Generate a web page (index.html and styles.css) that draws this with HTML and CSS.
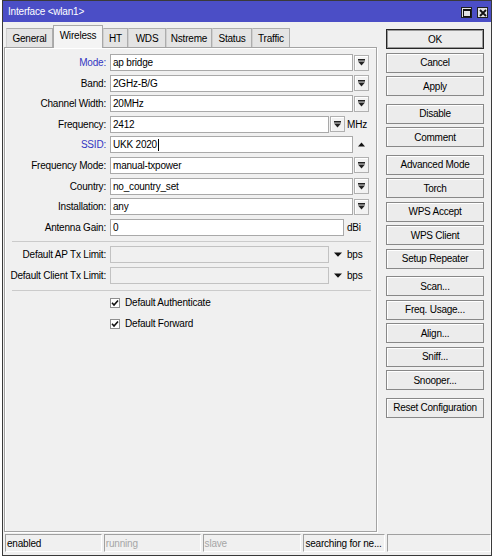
FILE: index.html
```html
<!DOCTYPE html>
<html>
<head>
<meta charset="utf-8">
<link rel="stylesheet" href="styles.css">
</head>
<body>
<div class="window">
  <div class="titlebar">
    <span class="title">Interface &lt;wlan1&gt;</span>
    <div class="tb-btns">
      <span class="tb-btn"><svg width="8" height="8" viewBox="0 0 8 8"><rect x="0.5" y="0.5" width="7" height="7" fill="none" stroke="#111" stroke-width="1"/><rect x="0" y="0" width="8" height="2" fill="#111"/></svg></span>
      <span class="tb-btn"><svg width="8" height="8" viewBox="0 0 8 8"><path d="M1 1L7 7M7 1L1 7" stroke="#111" stroke-width="1.8"/></svg></span>
    </div>
  </div>
  <div class="main">
    <div class="left">
      <div class="tabs">
        <div class="tab t-general">General</div>
        <div class="tab active t-wireless">Wireless</div>
        <div class="tab t-ht">HT</div>
        <div class="tab t-wds">WDS</div>
        <div class="tab t-nstreme">Nstreme</div>
        <div class="tab t-status">Status</div>
        <div class="tab t-traffic">Traffic</div>
      </div>
      <div class="panel">
        <div class="group">
          <div class="row"><span class="lbl blue">Mode:</span><span class="field w-full">ap bridge</span><span class="dropbtn"><svg width="7" height="7" viewBox="0 0 7 7"><rect x="0" y="0" width="7" height="1.6" fill="#222"/><path d="M0 2.6H7L3.5 6.6Z" fill="#222"/></svg></span></div>
          <div class="row"><span class="lbl">Band:</span><span class="field w-full">2GHz-B/G</span><span class="dropbtn"><svg width="7" height="7" viewBox="0 0 7 7"><rect x="0" y="0" width="7" height="1.6" fill="#222"/><path d="M0 2.6H7L3.5 6.6Z" fill="#222"/></svg></span></div>
          <div class="row"><span class="lbl">Channel Width:</span><span class="field w-full">20MHz</span><span class="dropbtn"><svg width="7" height="7" viewBox="0 0 7 7"><rect x="0" y="0" width="7" height="1.6" fill="#222"/><path d="M0 2.6H7L3.5 6.6Z" fill="#222"/></svg></span></div>
          <div class="row"><span class="lbl">Frequency:</span><span class="field w-short">2412</span><span class="dropbtn"><svg width="7" height="7" viewBox="0 0 7 7"><rect x="0" y="0" width="7" height="1.6" fill="#222"/><path d="M0 2.6H7L3.5 6.6Z" fill="#222"/></svg></span><span class="unit u-btn">MHz</span></div>
          <div class="row"><span class="lbl blue">SSID:</span><span class="field w-full">UKK 2020<span class="caret"></span></span><span class="uparrow"><svg width="7" height="5" viewBox="0 0 7 5"><path d="M0 4.5H7L3.5 0.5Z" fill="#111"/></svg></span></div>
          <div class="row"><span class="lbl">Frequency Mode:</span><span class="field w-full">manual-txpower</span><span class="dropbtn"><svg width="7" height="7" viewBox="0 0 7 7"><rect x="0" y="0" width="7" height="1.6" fill="#222"/><path d="M0 2.6H7L3.5 6.6Z" fill="#222"/></svg></span></div>
          <div class="row"><span class="lbl">Country:</span><span class="field w-full">no_country_set</span><span class="dropbtn"><svg width="7" height="7" viewBox="0 0 7 7"><rect x="0" y="0" width="7" height="1.6" fill="#222"/><path d="M0 2.6H7L3.5 6.6Z" fill="#222"/></svg></span></div>
          <div class="row"><span class="lbl">Installation:</span><span class="field w-full">any</span><span class="dropbtn"><svg width="7" height="7" viewBox="0 0 7 7"><rect x="0" y="0" width="7" height="1.6" fill="#222"/><path d="M0 2.6H7L3.5 6.6Z" fill="#222"/></svg></span></div>
          <div class="row"><span class="lbl">Antenna Gain:</span><span class="field w-mid">0</span><span class="unit u-field">dBi</span></div>
        </div>
        <div class="sep sep1"></div>
        <div class="group">
          <div class="row"><span class="lbl">Default AP Tx Limit:</span><span class="field w-short disabled"></span><span class="downarrow"><svg width="8" height="5" viewBox="0 0 8 5"><path d="M0 0.5H8L4 4.8Z" fill="#111"/></svg></span><span class="unit u-arrow">bps</span></div>
          <div class="row"><span class="lbl">Default Client Tx Limit:</span><span class="field w-short disabled"></span><span class="downarrow"><svg width="8" height="5" viewBox="0 0 8 5"><path d="M0 0.5H8L4 4.8Z" fill="#111"/></svg></span><span class="unit u-arrow">bps</span></div>
        </div>
        <div class="sep sep2"></div>
        <div class="checks">
          <div class="crow"><span class="cbox"><svg width="8" height="8" viewBox="0 0 8 8"><path d="M1 3.8L3 6L7 1.5" fill="none" stroke="#111" stroke-width="1.6"/></svg></span><span>Default Authenticate</span></div>
          <div class="crow"><span class="cbox"><svg width="8" height="8" viewBox="0 0 8 8"><path d="M1 3.8L3 6L7 1.5" fill="none" stroke="#111" stroke-width="1.6"/></svg></span><span>Default Forward</span></div>
        </div>
      </div>
    </div>
    <div class="side">
      <div class="bgroup">
        <div class="btn default">OK</div>
        <div class="btn">Cancel</div>
        <div class="btn">Apply</div>
      </div>
      <div class="bgroup">
        <div class="btn">Disable</div>
        <div class="btn">Comment</div>
      </div>
      <div class="bgroup">
        <div class="btn">Advanced Mode</div>
        <div class="btn">Torch</div>
        <div class="btn">WPS Accept</div>
        <div class="btn">WPS Client</div>
        <div class="btn">Setup Repeater</div>
      </div>
      <div class="bgroup">
        <div class="btn">Scan...</div>
        <div class="btn">Freq. Usage...</div>
        <div class="btn">Align...</div>
        <div class="btn">Sniff...</div>
        <div class="btn">Snooper...</div>
      </div>
      <div class="bgroup">
        <div class="btn">Reset Configuration</div>
      </div>
    </div>
  </div>
  <div class="statusbar">
    <span class="sfield s1">enabled</span>
    <span class="sfield s2 dim">running</span>
    <span class="sfield s3 dim">slave</span>
    <span class="sfield s4">searching for ne...</span>
    <span class="sfield s5"></span>
  </div>
</div>
</body>
</html>
```

FILE: styles.css
```css
* { box-sizing: border-box; }

body {
  margin: 0;
  padding: 0 2px;
  background: #ffffff;
  font-family: "Liberation Sans", Arial, sans-serif;
  font-size: 10px;
  letter-spacing: -0.2px;
  color: #000;
}

.window {
  width: 490px;
  height: 556px;
  border: 1px solid #3a3a3a;
  background: #f0f0f0;
  display: flex;
  flex-direction: column;
}

.titlebar {
  flex: none;
  height: 21px;
  background: #4b4ec6;
  color: #fff;
  display: flex;
  align-items: center;
  padding: 0 3px 0 5px;
}

.title {
  flex: 1;
  line-height: 1;
  padding-top: 1px;
}

.tb-btns {
  display: flex;
  gap: 5px;
  padding-top: 2px;
}

.tb-btn {
  width: 11px;
  height: 11px;
  background: #e2e2e2;
  border: 1px solid #202020;
  display: flex;
  align-items: center;
  justify-content: center;
}

.main {
  flex: none;
  height: 510px;
  display: flex;
}

.left {
  width: 374px;
  padding-left: 1px;
  display: flex;
  flex-direction: column;
}

.tabs {
  height: 25px;
  display: flex;
  align-items: flex-end;
  padding-left: 2px;
}

.tab {
  height: 19px;
  border: 1px solid #adadad;
  border-bottom: none;
  border-left-color: #d0d0d0;
  background: #e4e4e4;
  display: flex;
  align-items: center;
  justify-content: center;
  white-space: nowrap;
}

.tab.active {
  height: 23px;
  margin-bottom: -1px;
  background: #f4f4f4;
  position: relative;
  z-index: 1;
  border-color: #a8a8a8;
  padding-bottom: 3px;
}

.t-general { width: 47px; }
.t-wireless { width: 50px; }
.t-ht { width: 25px; }
.t-wds { width: 38px; }
.t-nstreme { width: 46px; }
.t-status { width: 40px; }
.t-traffic { width: 38px; }

.panel {
  height: 485px;
  width: 373px;
  border: 1px solid #a3a3a3;
  box-shadow: inset 1px 1px 0 #ffffff, 1px 1px 0 #ffffff;
  padding-top: 6px;
}

.group {
  display: flex;
  flex-direction: column;
  gap: 3.6px;
}

.row {
  height: 17px;
  display: flex;
  align-items: center;
}

.lbl {
  width: 102px;
  margin-right: 3px;
  padding-right: 1px;
  text-align: right;
  white-space: nowrap;
}

.lbl.blue { color: #3437c2; }

.field {
  height: 17px;
  border: 1px solid #a9a9a9;
  background: #fff;
  padding: 0 2px;
  display: flex;
  align-items: center;
  white-space: nowrap;
}

.field.disabled {
  background: #f0f0f0;
  border-color: #c2c2c2;
}

.w-full { width: 243px; }
.w-short { width: 219px; }
.w-mid { width: 234px; }

.caret {
  display: inline-block;
  width: 1px;
  height: 12px;
  background: #000;
  margin-left: 1px;
}

.dropbtn {
  width: 15px;
  height: 16px;
  margin-left: 1px;
  border: 1px solid #b0b0b0;
  background: #f2f2f2;
  box-shadow: inset 1px 1px 0 #fff;
  display: flex;
  align-items: center;
  justify-content: center;
}

.uparrow {
  margin-left: 5px;
  display: flex;
  align-items: center;
}

.downarrow {
  margin-left: 5px;
  display: flex;
  align-items: center;
}

.unit { white-space: nowrap; }
.u-btn { margin-left: 2px; }
.u-field { margin-left: 3px; }
.u-arrow { margin-left: 5px; }

.sep {
  height: 1px;
  background: #cbcbcb;
  margin-left: 7px;
  margin-right: 5px;
}

.sep1 { margin-top: 5px; margin-bottom: 4.7px; }
.sep2 { margin-top: 6px; margin-bottom: 3.4px; }

.checks {
  display: flex;
  flex-direction: column;
  gap: 4px;
  padding-left: 105px;
}

.crow {
  height: 17px;
  display: flex;
  align-items: center;
}

.cbox {
  width: 10px;
  height: 10px;
  border: 1px solid #8e8e8e;
  background: #fff;
  margin-right: 5px;
  display: flex;
  align-items: center;
  justify-content: center;
}

.side {
  margin-left: 9px;
  width: 98px;
  padding-top: 7px;
  display: flex;
  flex-direction: column;
  gap: 7.5px;
}

.bgroup {
  display: flex;
  flex-direction: column;
  gap: 3.5px;
}

.btn {
  height: 20px;
  border: 1px solid #888888;
  background: #ececec;
  box-shadow: inset 1px 1px 0 #ffffff;
  display: flex;
  align-items: center;
  justify-content: center;
  white-space: nowrap;
  letter-spacing: -0.25px;
}

.btn.default {
  border-color: #262626;
  box-shadow: inset 0 0 0 1px #9a9a9a;
}

.statusbar {
  flex: none;
  height: 23px;
  display: flex;
  gap: 2px;
  padding: 2px 0 0 2px;
}

.sfield {
  height: 18px;
  border-top: 1px solid #a0a0a0;
  border-left: 1px solid #a0a0a0;
  border-bottom: 1px solid #ffffff;
  border-right: 1px solid #ffffff;
  padding-left: 1px;
  display: flex;
  align-items: center;
  white-space: nowrap;
}

.sfield.dim { color: #a6a6a6; }

.s1 { width: 97px; }
.s2 { width: 97px; }
.s3 { width: 99px; }
.s4 { width: 82px; }
.s5 { width: 104px; }
```
